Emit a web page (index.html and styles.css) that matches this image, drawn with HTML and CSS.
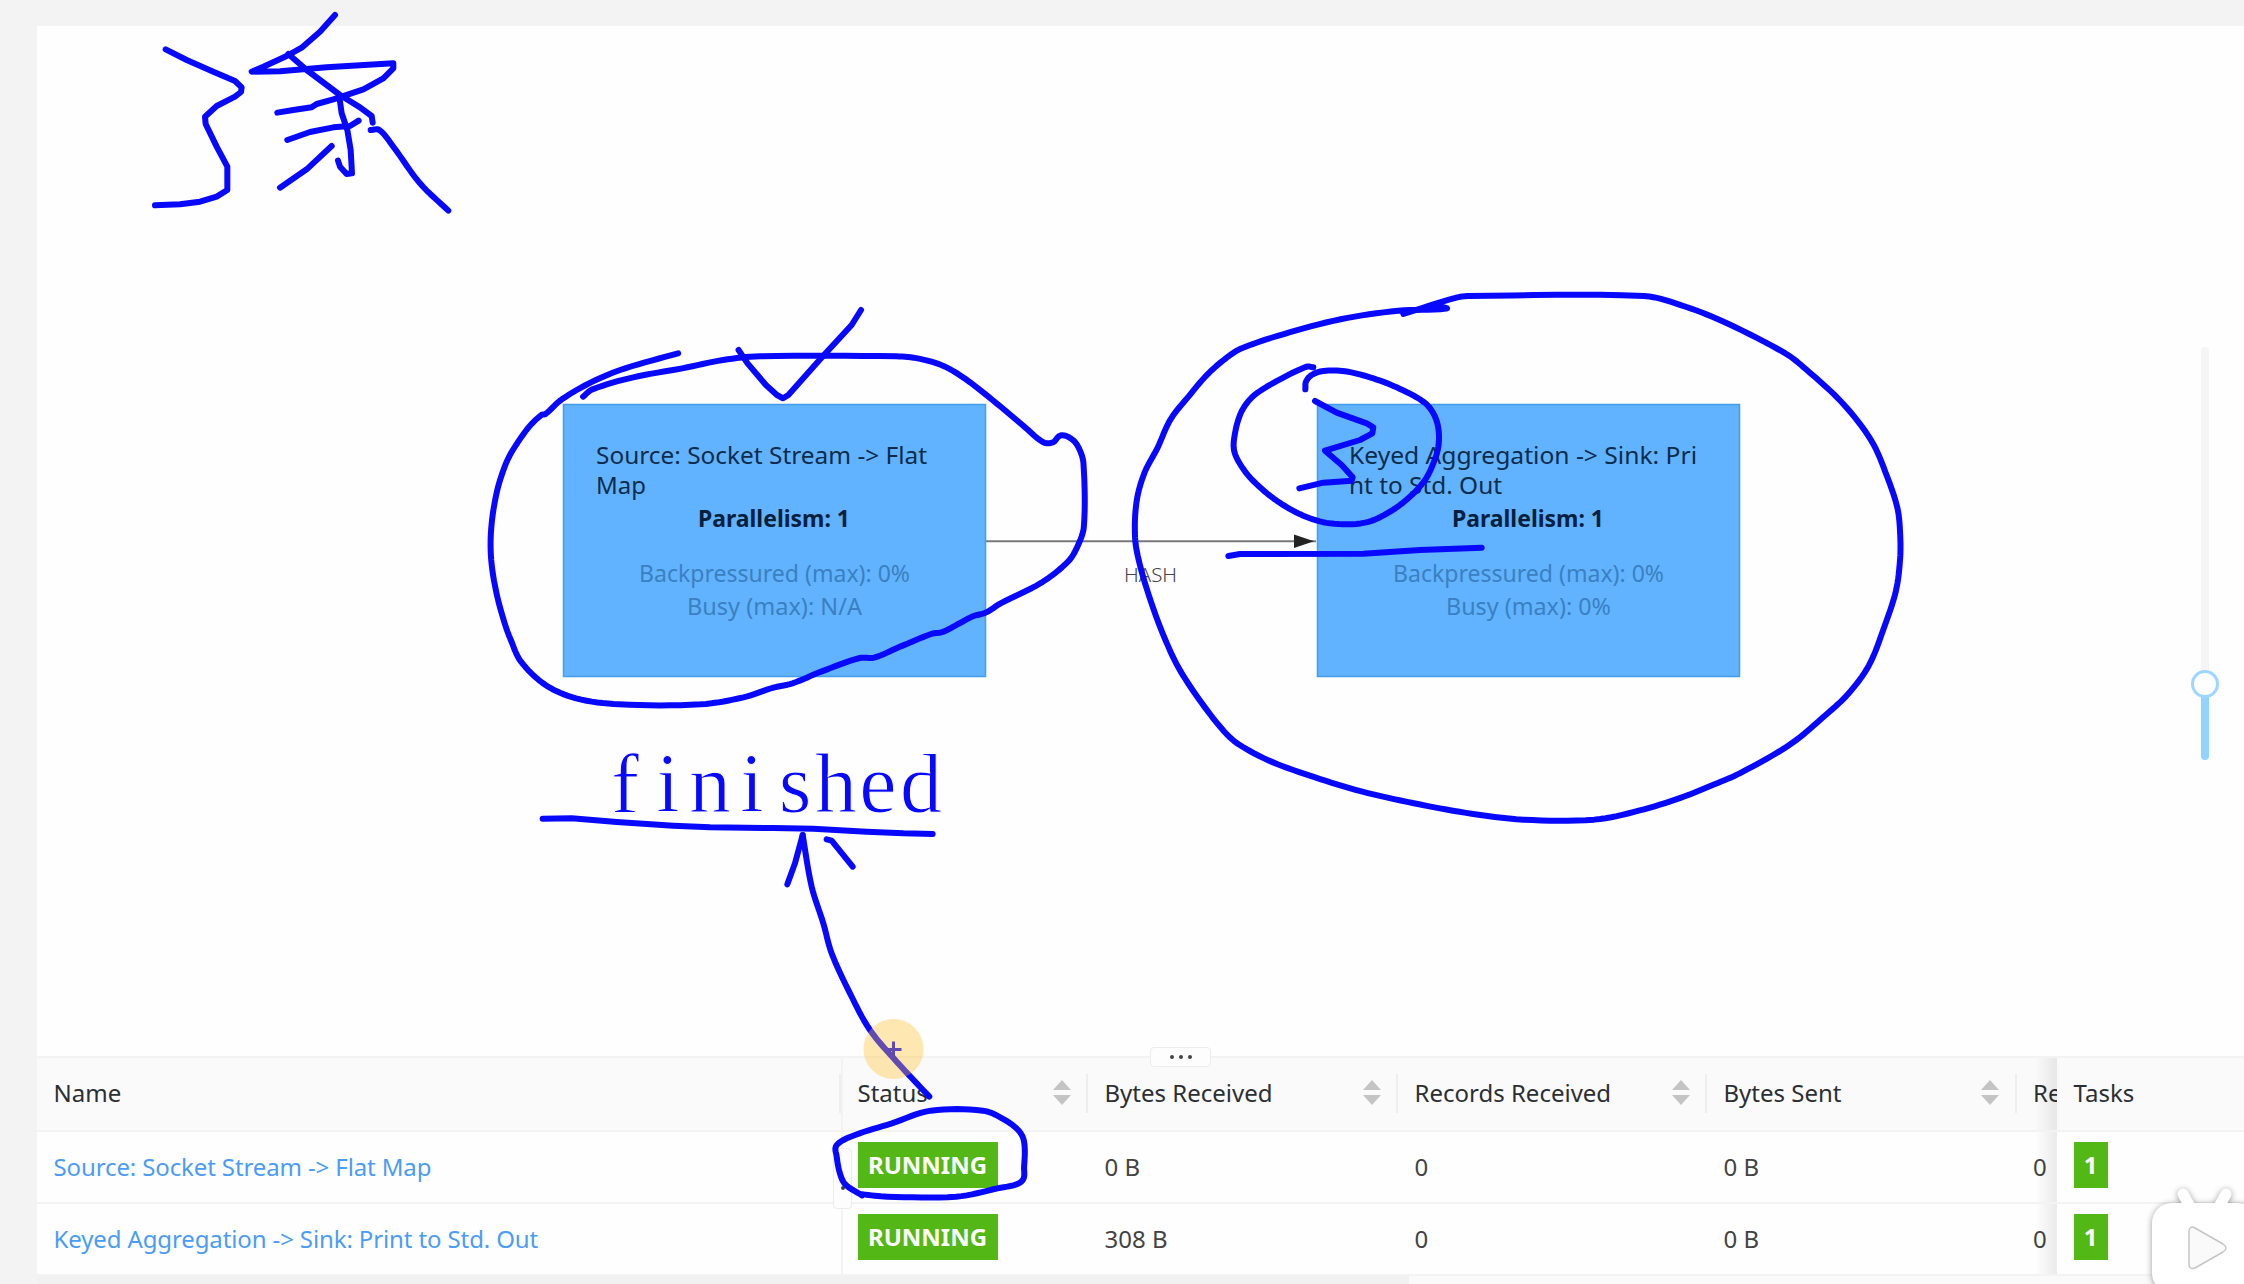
FILE: index.html
```html
<!DOCTYPE html>
<html lang="en">
<head>
<meta charset="utf-8">
<title>Job overview</title>
<link rel="stylesheet" href="styles.css">
</head>
<body>
<main class="page">
  <section class="graph">
    <svg class="dag" viewBox="0 0 2207 1030" aria-label="Job graph">
      <g transform="translate(-37 -26)">
        <path class="edge" d="M986 541.2H1316"/>
        <path class="edge-head" d="M1294 534.500l20 6.7-20 6.7z"/>
        <text class="edge-label" x="1124" y="582" textLength="53" lengthAdjust="spacingAndGlyphs">HASH</text>
        <rect class="node" x="563.5" y="404.5" width="422" height="272"/>
        <text class="node-name" x="596" y="463.500" textLength="331" lengthAdjust="spacingAndGlyphs">Source: Socket Stream -&gt; Flat</text>
        <text class="node-name" x="596" y="493.500" textLength="50" lengthAdjust="spacingAndGlyphs">Map</text>
        <text class="node-par" x="698" y="526.500" textLength="152" lengthAdjust="spacingAndGlyphs">Parallelism: 1</text>
        <text class="node-stat" x="639" y="582" textLength="271" lengthAdjust="spacingAndGlyphs">Backpressured (max): 0%</text>
        <text class="node-stat" x="687" y="615" textLength="175" lengthAdjust="spacingAndGlyphs">Busy (max): N/A</text>
        <rect class="node" x="1317.5" y="404.5" width="422" height="272"/>
        <text class="node-name" x="1349" y="463.500" textLength="348" lengthAdjust="spacingAndGlyphs">Keyed Aggregation -&gt; Sink: Pri</text>
        <text class="node-name" x="1349" y="493.500" textLength="153" lengthAdjust="spacingAndGlyphs">nt to Std. Out</text>
        <text class="node-par" x="1452" y="526.500" textLength="152" lengthAdjust="spacingAndGlyphs">Parallelism: 1</text>
        <text class="node-stat" x="1393" y="582" textLength="271" lengthAdjust="spacingAndGlyphs">Backpressured (max): 0%</text>
        <text class="node-stat" x="1446" y="615" textLength="165" lengthAdjust="spacingAndGlyphs">Busy (max): 0%</text>
      </g>
    </svg>
    <div class="zoom-slider"><div class="zoom-fill"></div><div class="zoom-handle"></div></div>
  </section>

  <section class="table">
    <div class="row head">
      <div class="cell"><span>Name</span></div>
      <div class="cell"><span>Status</span><svg class="sort" viewBox="0 0 18 26"><path d="M9 0l9 10H0zM0 15h18l-9 10z"/></svg></div>
      <div class="cell"><span>Bytes Received</span><svg class="sort" viewBox="0 0 18 26"><path d="M9 0l9 10H0zM0 15h18l-9 10z"/></svg></div>
      <div class="cell"><span>Records Received</span><svg class="sort" viewBox="0 0 18 26"><path d="M9 0l9 10H0zM0 15h18l-9 10z"/></svg></div>
      <div class="cell"><span>Bytes Sent</span><svg class="sort" viewBox="0 0 18 26"><path d="M9 0l9 10H0zM0 15h18l-9 10z"/></svg></div>
      <div class="cell last"><span>Re</span></div>
      <div class="cell tasks"><span>Tasks</span></div>
    </div>
    <div class="row">
      <div class="cell"><a class="link">Source: Socket Stream -&gt; Flat Map</a></div>
      <div class="cell"><b class="tag">RUNNING</b></div>
      <div class="cell">0 B</div>
      <div class="cell">0</div>
      <div class="cell">0 B</div>
      <div class="cell last">0</div>
      <div class="cell tasks"><b class="tag count">1</b></div>
    </div>
    <div class="row">
      <div class="cell"><a class="link">Keyed Aggregation -&gt; Sink: Print to Std. Out</a></div>
      <div class="cell"><b class="tag">RUNNING</b></div>
      <div class="cell">308 B</div>
      <div class="cell">0</div>
      <div class="cell">0 B</div>
      <div class="cell last">0</div>
      <div class="cell tasks"><b class="tag count">1</b></div>
    </div>
    <div class="pane-line"></div>
    <div class="handle handle-h"><i></i><i></i><i></i></div>
    <div class="handle handle-v"><i></i></div>
  </section>
  <div class="scrollbar"><div class="scroll-rest"></div></div>
</main>

<svg class="ink" viewBox="0 0 2244 1284" aria-hidden="true">
  <g transform="translate(120 0) scale(.33333)">
    <polyline points="137,148 200,180 280,215 345,243 365,262 363,276 345,290 290,318 255,350 257,372 290,440 322,500 322,570 290,590 240,605 180,613 105,616"/>
    <polyline points="645,45 600,95 545,143 500,168 430,200 395,215 480,214 620,202 820,190 820,205 790,235 730,268 640,298 590,312 575,322 520,330 472,338"/>
    <polyline points="505,162 560,210 660,285 720,322 755,348 758,368"/>
    <polyline points="658,290 665,340 682,390 692,450 696,520 680,522 660,500 654,482"/>
    <polyline points="502,420 570,396 640,382 690,378 716,362"/>
    <polyline points="635,438 560,508 480,563"/>
    <polyline class="smooth" points="752,390 778,390 820,440 900,550 985,632"/>
  </g>
  <g transform="translate(470 290) scale(.40816 .33333)">
    <polyline class="smooth" points="277,320 300,298 400,262 520,235 620,210 710,199 1045,199 1100,206 1160,228 1215,268 1290,340 1360,412 1405,457 1428,457 1448,436 1475,448 1492,475 1503,520 1504,710 1488,770 1465,815 1400,878 1300,940 1265,967 1230,980 1160,1025 1130,1032 1050,1072 990,1103 955,1104 860,1145 790,1180 740,1194 670,1222 565,1243 365,1243 260,1225 185,1185 125,1115 100,1050 85,1000 65,910 52,810 52,715 65,610 85,530 105,480 145,410 175,375 185,372 225,328 300,275 380,235 510,190"/>
    <polyline points="658,180 680,220 725,285 752,315 767,325 780,315 860,205 935,105 958,60"/>
  </g>
  <g transform="translate(1100 280) scale(.52296 .35714)">
    <polyline class="smooth" points="580,95 680,50 705,45 1040,45 1120,75 1200,122 1310,205 1350,250 1420,345 1475,450 1505,550 1525,640 1530,710 1530,780 1522,870 1500,970 1470,1080 1430,1160 1390,1215 1320,1300 1225,1380 1175,1412 1110,1450 1030,1486 945,1511 810,1511 700,1492 600,1465 500,1432 410,1392 330,1350 265,1300 235,1260 190,1175 150,1085 120,990 95,890 75,790 67,720 70,620 85,540 110,470 135,390 170,325 205,265 240,220 270,192 350,152 460,110 570,86 662,80 640,72"/>
  </g>
  <g transform="translate(1220 350) scale(.33333)">
    <polyline class="smooth" points="256,118 258,95 275,75 310,63 375,64 450,82 530,112 610,155 640,190 655,235 655,290 640,340 615,390 570,440 510,485 435,518 330,520 250,497 170,452 100,393 62,345 42,300 45,250 60,195 80,160 110,130 180,88 260,50 280,52"/>
    <polyline points="285,153 350,188 440,220 460,232 457,250 420,270 315,302 365,345 398,382 395,392 310,398 238,415"/>
    <polyline points="25,618 60,612 430,611 600,600 785,593"/>
  </g>
  <g transform="translate(520 720) scale(.33333)">
    <polyline points="68,296 155,295 290,306 460,317 570,322 760,324 880,326 1040,335 1150,340 1238,342"/>
    <polyline points="802,493 825,430 848,345"/>
    <polyline class="smooth" points="848,345 875,500 910,610 935,700 990,820 1050,930 1130,1025 1228,1130"/>
    <polyline points="920,358 935,362 998,440"/>
  </g>
  <g transform="translate(800 1030) scale(.45918 .33333)">
    <polyline class="smooth" points="135,496 100,465 88,435 80,380 80,345 120,315 200,280 285,242 398,242 440,265 475,300 488,335 488,410 482,455 430,475 340,500 190,500 135,493"/>
  </g>
  <text class="note" y="812" x="625 668 710 752 795 836 878 921">finished</text>
  <path class="cross" d="M893.5 1041.500v16M885.500 1049.500h16"/>
  <circle class="pointer" cx="893.500" cy="1049" r="30"/>
</svg>

<svg class="player" viewBox="0 0 104 104" aria-label="Play">
  <g class="player-shape">
    <path class="ear" d="M43 16l10 18M86 16l-10 18"/>
    <rect x="12" y="25" width="106" height="90" rx="20"/>
  </g>
  <path class="play" d="M49 54q0-7 6-4l28 16q6 4 0 8L55 90q-6 2-6-4z"/>
</svg>
<script src="ink.js"></script>
</body>
</html>
```
FILE: ink.js
```
// Turns the rounded pen strokes into smooth curves through their points.
document.querySelectorAll("polyline.smooth").forEach(function (line) {
  var p = line.getAttribute("points").trim().split(/\s+/).map(function (s) {
    return s.split(",").map(Number);
  });
  var out = [];
  for (var i = 0; i < p.length - 1; i++) {
    var a = p[i - 1] || p[i], b = p[i], c = p[i + 1], d = p[i + 2] || c;
    var len = Math.hypot(c[0] - b[0], c[1] - b[1]);
    var tan = function (u, v) {
      var x = v[0] - u[0], y = v[1] - u[1], n = Math.hypot(x, y) || 1;
      return [x / n * len, y / n * len];
    };
    var m = tan(a, c), n = tan(b, d);
    for (var k = 0; k < 8; k++) {
      var t = k / 8, t2 = t * t, t3 = t2 * t;
      out.push([0, 1].map(function (q) {
        return ((2 * t3 - 3 * t2 + 1) * b[q] + (t3 - 2 * t2 + t) * m[q] +
          (3 * t2 - 2 * t3) * c[q] + (t3 - t2) * n[q]).toFixed(1);
      }).join(","));
    }
  }
  out.push(p[p.length - 1].join(","));
  line.setAttribute("points", out.join(" "));
});
```
FILE: styles.css
```css
* { box-sizing: border-box; }
body {
  margin: 0;
  width: 2244px;
  height: 1284px;
  overflow: hidden;
  position: relative;
  background: #f3f3f3;
  color: #434343;
  font-family: "Noto Sans", "Open Sans", sans-serif;
  font-size: 24px;
}
.page {
  display: flex;
  flex-direction: column;
  height: 1284px;
  padding: 26px 0 0 37px;
}
.graph { position: relative; height: 1030px; background: #fefefe; }
.dag { display: block; width: 2207px; height: 1030px; }
.edge { stroke: #777; stroke-width: 2; }
.edge-head { fill: #222; }
.edge-label { font-size: 20px; fill: #444; font-weight: 300; }
.node { fill: #61b3ff; stroke: #459eed; stroke-width: 1.5; }
.node-name { font-size: 24px; fill: #0c2c4b; }
.node-par { font-size: 24px; font-weight: 700; fill: #06203c; }
.node-stat { font-size: 24px; fill: #3a80c0; }

.zoom-slider {
  position: absolute;
  left: 2164px;
  top: 321px;
  width: 8px;
  height: 413px;
  border-radius: 4px;
  background: #f5f5f5;
}
.zoom-fill {
  position: absolute;
  bottom: 0;
  width: 8px;
  height: 75px;
  border-radius: 4px;
  background: #91d5ff;
}
.zoom-handle {
  position: absolute;
  left: -10px;
  top: 323px;
  width: 28px;
  height: 28px;
  border: 3px solid #9dd6ff;
  border-radius: 50%;
  background: #fff;
}

.table { position: relative; height: 220px; background: #fefefe; border-top: 2px solid #f3f3f3; }
.row {
  display: grid;
  grid-template-columns: 804px 247px 310px 309px 309.500px 40.500px 187px;
  height: 72px;
  border-bottom: 2px solid #f3f3f3;
}
.row.head { height: 74px; background: #fafafa; color: #2b2f33; }
.cell {
  display: flex;
  align-items: center;
  position: relative;
  padding: 0 17.500px 2px 16.500px;
  white-space: nowrap;
  min-width: 0;
}
.head .cell { justify-content: space-between; padding-bottom: 4px; }
.head .cell:not(.tasks)::after {
  content: "";
  position: absolute;
  right: 0;
  top: 16px;
  width: 2px;
  height: 39px;
  background: #eee;
}
.head .last::after { display: none; }
.last { overflow: hidden; }
.last::before {
  content: "";
  position: absolute;
  right: 0;
  top: 0;
  width: 22px;
  height: 100%;
  background: linear-gradient(90deg, rgba(0,0,0,0), rgba(0,0,0,.08));
}
.sort { width: 18px; height: 26px; fill: #c4c4c4; margin-top: 2px; }
.link { color: #4b9cf5; letter-spacing: -.12px; }
.tag {
  display: flex;
  align-items: center;
  justify-content: center;
  width: 140px;
  height: 46px;
  margin-top: -3px;
  background: #53b815;
  color: #fff;
  font-weight: 700;
}
.count { width: 34px; }
.pane-line {
  position: absolute;
  left: 804px;
  top: 0;
  width: 2px;
  height: 218px;
  background: #f3f3f3;
}
.handle {
  position: absolute;
  display: flex;
  align-items: center;
  justify-content: center;
  gap: 5px;
  background: #fdfdfd;
  border: 1.500px solid #ececec;
  border-radius: 4px;
}
.handle i { width: 4px; height: 4px; border-radius: 50%; background: #444; }
.handle-h { left: 1113px; top: -11px; width: 61px; height: 20px; }
.handle-v { left: 796px; top: 90px; width: 19px; height: 61px; padding-top: 18px; }
.scrollbar { display: flex; justify-content: flex-end; height: 8px; background: #f1f1f1; }
.scroll-rest { width: 835px; background: #fafafa; }

.ink { position: absolute; left: 0; top: 0; width: 2244px; height: 1284px; }
.ink polyline {
  fill: none;
  stroke: #0808ff;
  stroke-width: 6;
  stroke-linecap: round;
  stroke-linejoin: round;
  vector-effect: non-scaling-stroke;
}
.note {
  font-family: "Liberation Serif", serif;
  font-size: 84px;
  fill: #0808ff;
  stroke: #fff;
  stroke-width: 1px;
  text-anchor: middle;
}
.cross { stroke: #0808ff; stroke-width: 3; }
.pointer { fill: rgb(255, 190, 40); opacity: .36; }

.player { position: absolute; left: 2140px; top: 1178px; width: 104px; height: 104px; overflow: visible; }
.player-shape { fill: #fff; filter: drop-shadow(0 1px 3px rgba(0,0,0,.4)); }
.ear { stroke: #fff; stroke-width: 11; stroke-linecap: round; }
.play { fill: #fafafa; stroke: #c6c6c6; stroke-width: 1.500; }
```
